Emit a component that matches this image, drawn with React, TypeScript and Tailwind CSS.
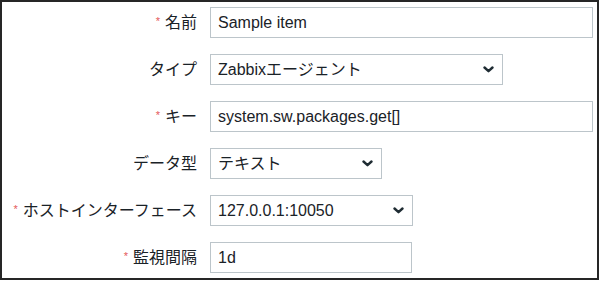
const FONT = {
  fontFamily: '"Liberation Sans", "Noto Sans CJK JP", sans-serif',
};

type Row = {
  label: string;
  required?: boolean;
  value: string;
  width: string;
  select?: boolean;
};

const ROWS: Row[] = [
  { label: "名前", required: true, value: "Sample item", width: "w-[383px]" },
  { label: "タイプ", value: "Zabbixエージェント", width: "w-[293px]", select: true },
  { label: "キー", required: true, value: "system.sw.packages.get[]", width: "w-[383px]" },
  { label: "データ型", value: "テキスト", width: "w-[172px]", select: true },
  {
    label: "ホストインターフェース",
    required: true,
    value: "127.0.0.1:10050",
    width: "w-[203px]",
    select: true,
  },
  { label: "監視間隔", required: true, value: "1d", width: "w-[202px]" },
];

function Chevron() {
  return (
    <svg width="11" height="7" viewBox="0 0 11 7" className="shrink-0">
      <path
        d="M1.5 1.5 L5.5 5.2 L9.5 1.5"
        fill="none"
        stroke="#1f2c33"
        strokeWidth="2.4"
        strokeLinecap="round"
        strokeLinejoin="round"
      />
    </svg>
  );
}

export default function App() {
  return (
    <div className="bg-white w-[600px] h-[281px]" style={FONT}>
      <div className="w-[599px] h-[280px] border-2 border-[#262626] pt-[5px]">
        <div className="grid grid-cols-[195px_auto] gap-x-[13px] gap-y-[16px] justify-start">
          {ROWS.map((row) => (
            <div key={row.label} className="contents">
              <div className="h-[31px] flex items-center justify-end text-[16px] text-[#1a2227]">
                {row.required && (
                  <span className="text-[#e45959] text-[11px] mr-[5px] -mt-[2px]">*</span>
                )}
                <span>{row.label}</span>
              </div>
              <div
                className={`${row.width} h-[31px] border border-[#bcc5ca] bg-white flex items-center justify-between pl-[7px] pr-[8px] text-[16px] text-[#1a2227]`}
              >
                <span className="whitespace-nowrap">{row.value}</span>
                {row.select && <Chevron />}
              </div>
            </div>
          ))}
        </div>
      </div>
    </div>
  );
}
